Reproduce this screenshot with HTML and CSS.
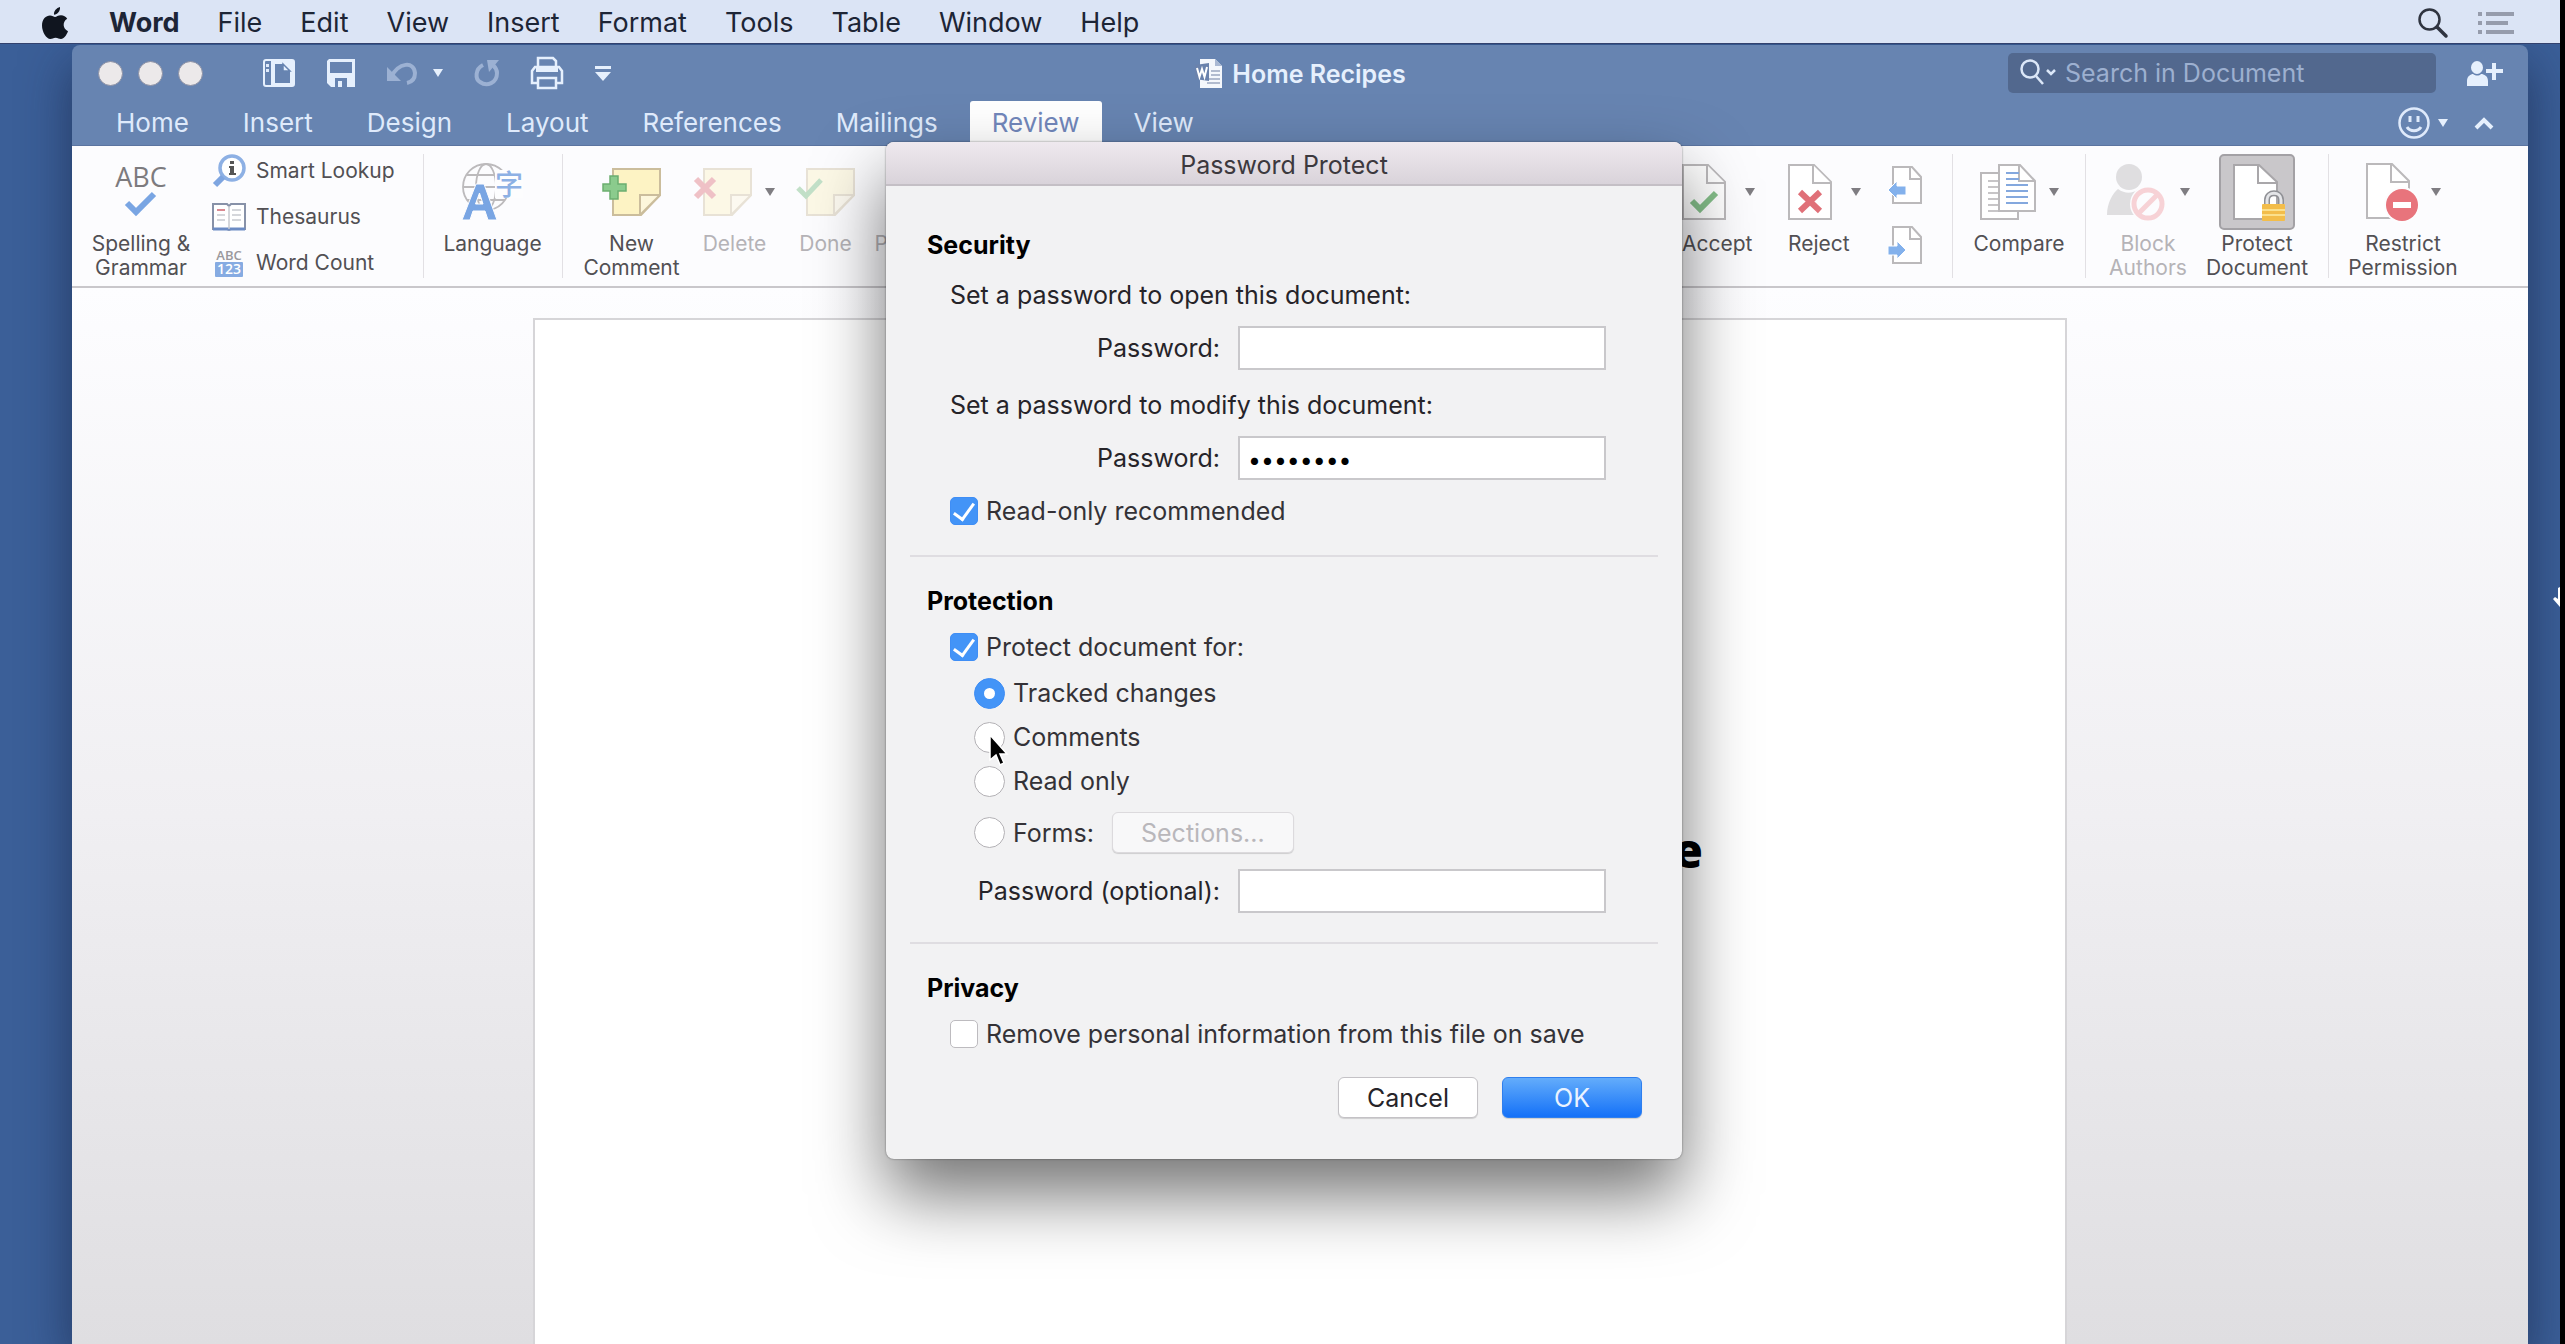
FILE: index.html
```html
<!DOCTYPE html>
<html lang="en">
<head>
<meta charset="utf-8">
<title>Home Recipes</title>
<link rel="stylesheet" href="styles.css">
</head>
<body>
<svg class="defs" width="0" height="0" aria-hidden="true">
  <symbol id="caret" viewBox="0 0 10 8"><path d="M0 0H10L5 8Z" fill="currentColor"/></symbol>
  <symbol id="note" viewBox="0 0 58 48">
    <path d="M10 1H57V27L38 47H10Z" fill="#fdf3c4" stroke="#cbbd9c" stroke-width="2"/>
    <path d="M57 27H37V47Z" fill="#fdf7dc" stroke="#cbbd9c" stroke-width="2"/>
  </symbol>
  <symbol id="sheet" viewBox="0 0 44 56">
    <path d="M1 1H26L43 18V55H1Z" fill="#fff" stroke="#bbb9bb" stroke-width="2"/>
    <path d="M25 1V19H43" fill="#fff" stroke="#bbb9bb" stroke-width="2"/>
  </symbol>
</svg>

<header class="menubar">
  <svg class="apple" width="26" height="32" viewBox="0 0 26 32"><path d="M18 0C18.400 4 15.500 7.500 12 7.800 11.600 4 14.500 1 18 0ZM13 10C14.500 10 16 8.300 19 8.300 21.500 8.300 24 9.500 25.200 11.800 20 15 20.800 22 26 24.200 24.500 28 22 32 19 32 16.800 32 16 30.700 13.600 30.700 11.200 30.700 10.300 32 8.300 32 4.500 32 0 25 0 18.500 0 12 4 8.500 8 8.500 10.300 8.500 12 10 13 10Z" fill="#10151f"/></svg>
  <nav class="menus">
    <a href="#" class="app">Word</a><a href="#">File</a><a href="#">Edit</a><a href="#">View</a><a href="#">Insert</a><a href="#">Format</a><a href="#">Tools</a><a href="#">Table</a><a href="#">Window</a><a href="#">Help</a>
  </nav>
  <div class="status">
    <button type="button" aria-label="Spotlight"><svg width="30" height="30" viewBox="0 0 30 30" fill="none" stroke="#2f3440"><circle cx="11.500" cy="11.500" r="10" stroke-width="2.500"/><path d="M19 19L28 28" stroke-width="3.500" stroke-linecap="round"/></svg></button>
    <button type="button" aria-label="Notifications"><svg width="36" height="24" viewBox="0 0 36 24" fill="#969cac"><path d="M0 1H4V5H0ZM8 1H36V5H8ZM0 10H4V14H0ZM8 10H30V14H8ZM0 19H4V23H0ZM8 19H36V23H8Z"/></svg></button>
  </div>
</header>

<main class="desktop">
  <section class="window">
    <div class="titlebar">
      <div class="left-tools">
        <div class="lights"><button type="button" aria-label="Close"></button><button type="button" aria-label="Minimize"></button><button type="button" aria-label="Zoom"></button></div>
        <div class="quick">
          <button type="button" aria-label="Sidebar"><svg width="32" height="28" viewBox="0 0 32 28"><rect x="1" y="1" width="30" height="26" rx="2" fill="none" stroke="#e6f0fd" stroke-width="2"/><path d="M8 1H31V27H8Z" fill="#e6f0fd"/><path d="M3 5H6V8H3ZM3 10H6V13H3Z" fill="#dfeafb"/><path d="M12 5H20L27 12V24H12Z" fill="#6784b1"/><path d="M20 5V12H27Z" fill="#e6f0fd" stroke="#6784b1" stroke-width="1.500"/></svg></button>
          <button type="button" aria-label="Save"><svg width="28" height="28" viewBox="0 0 28 28"><path d="M2 0H28V28H4L0 24V2Z" fill="#e6f0fd"/><path d="M3 3H25V14H3Z" fill="#6784b1"/><path d="M8 19H20V28H8Z" fill="#6784b1"/><path d="M11 22H15V28H11Z" fill="#e6f0fd"/></svg></button>
          <button type="button" aria-label="Undo" class="with-caret"><svg width="30" height="24" viewBox="0 0 30 24"><path d="M4 16C12 1 27 0 28 12 28 18 25 21 20 22" fill="none" stroke="#9cb1d3" stroke-width="4"/><path d="M0 6V20H14Z" fill="#9cb1d3"/></svg><svg class="caret" width="10" height="8"><use href="#caret"/></svg></button>
          <button type="button" aria-label="Redo"><svg width="24" height="26" viewBox="0 0 24 26"><path d="M8 5C0 9 0 19 5 22 12 27 22 23 22 13 22 9 20 7 18 5" fill="none" stroke="#9cb1d3" stroke-width="4"/><path d="M12 0H24L14 12Z" fill="#9cb1d3"/></svg></button>
          <button type="button" aria-label="Print"><svg width="32" height="32" viewBox="0 0 32 32" fill="none" stroke="#e6f0fd" stroke-width="2.500"><path d="M7 12V1H22L25 4V12"/><path d="M4 10H28L31 14V26H1V14Z"/><path d="M5 9H27V15H5Z" fill="#e6f0fd" stroke="none"/><path d="M7 21H25V31H7Z" fill="#6784b1"/></svg></button>
          <button type="button" aria-label="Customize toolbar"><svg width="16" height="15" viewBox="0 0 16 15" fill="#e6f0fd"><path d="M0 0H16V3H0ZM0 6H16L8 15Z"/></svg></button>
        </div>
      </div>
      <h1 class="doc-title"><svg width="28" height="30" viewBox="0 0 28 30"><path d="M5 0H20L27 7V29H5Z" fill="#f4f7fc"/><path d="M20 0V7H27Z" fill="#aab9d4"/><path d="M16 12H25M16 16H25M12 20H25M12 24H25" stroke="#9aa8c0" stroke-width="1.500"/><path d="M0 6L14 4V22L0 20Z" fill="#6a82ac"/><path d="M2 9L4.500 18 7 10 9.500 18 12 8" fill="none" stroke="#fff" stroke-width="2"/></svg>Home Recipes</h1>
      <div class="right-tools">
        <label class="search">
          <svg width="36" height="28" viewBox="0 0 36 28" fill="none" stroke="#dbe7f8" stroke-width="2.500"><circle cx="10" cy="10" r="8.500"/><path d="M16 17L23 25"/><path d="M27 11L31 15 35 11"/></svg>
          <input type="search" placeholder="Search in Document" aria-label="Search in Document">
        </label>
        <button type="button" aria-label="Share"><svg width="36" height="25" viewBox="0 0 36 25" fill="#e6f0fd"><ellipse cx="10" cy="6.500" rx="6" ry="6.500"/><path d="M0 25V20C0 15 4 13 6 13 9 15 12 15 14 13 17 13 21 15 21 20V25ZM25 2H29V8H36V12H29V19H25V12H19V8H25Z"/></svg></button>
      </div>
    </div>
    <div class="tabbar">
      <nav class="tabs"><a href="#">Home</a><a href="#">Insert</a><a href="#">Design</a><a href="#">Layout</a><a href="#">References</a><a href="#">Mailings</a><a href="#" class="active">Review</a><a href="#">View</a></nav>
      <div class="tab-tools">
        <button type="button" aria-label="Feedback" class="with-caret near"><svg width="32" height="32" viewBox="0 0 32 32" fill="none" stroke="#dfeafb" stroke-width="2.500"><circle cx="16" cy="16" r="14.500"/><path d="M9 20C12 25 20 25 23 20M12 9V15M20 9V15" stroke-width="3"/></svg><svg class="caret" width="10" height="8"><use href="#caret"/></svg></button>
        <button type="button" aria-label="Collapse ribbon"><svg width="20" height="13" viewBox="0 0 20 13" fill="none" stroke="#e6f0fd" stroke-width="4"><path d="M2 11L10 3 18 11"/></svg></button>
      </div>
    </div>

    <div class="ribbon">
      <div class="group proofing">
        <button type="button" class="tool w98">
          <span class="icon"><svg width="56" height="52" viewBox="0 0 56 52"><text x="28" y="21" text-anchor="middle" class="abc">ABC</text><path d="M14 37L23 46 41 28" fill="none" stroke="#79a5e3" stroke-width="6"/></svg></span>
          <span>Spelling &amp;<br>Grammar</span>
        </button>
        <div class="stack">
          <button type="button"><svg width="34" height="34" viewBox="0 0 34 34"><circle cx="20" cy="14" r="12" fill="#fff" stroke="#8db0e4" stroke-width="3.500"/><path d="M11 23L3 31" stroke="#7ea5e0" stroke-width="6"/><path d="M18 7H22V10H18ZM17 12H22V19H24V21H17V19H18V14H17Z" fill="#555"/></svg>Smart Lookup</button>
          <button type="button"><svg width="34" height="28" viewBox="0 0 34 28"><path d="M1 1H15L17 3 19 1H33V26H19L17 27 15 26H1Z" fill="#fff" stroke="#8791a8" stroke-width="2"/><path d="M1 26H33" stroke="#6d8cc4" stroke-width="3"/><path d="M17 3V26M20 7H29M20 12H29M20 17H29M5 12H13M5 17H13" stroke="#c8cad0" stroke-width="1.500"/><path d="M5 7H13" stroke="#d98a92" stroke-width="2"/></svg>Thesaurus</button>
          <button type="button"><svg width="34" height="28" viewBox="0 0 34 28"><text x="17" y="11" text-anchor="middle" class="abc-mini">ABC</text><rect x="3" y="13" width="28" height="15" rx="1" fill="#86abe2"/><text x="17" y="25" text-anchor="middle" class="num-mini">123</text></svg>Word Count</button>
        </div>
      </div>
      <div class="group">
        <button type="button" class="tool w98">
          <span class="icon"><svg width="62" height="58" viewBox="0 0 62 58"><g fill="none" stroke="#bcbabc" stroke-width="1.800"><circle cx="24" cy="24" r="23"/><ellipse cx="24" cy="24" rx="10" ry="23"/><path d="M1 24H47M5 12H43M5 37H43"/></g><path d="M0 57L14 21H22L35 57H26L23 48H11L8 57ZM13.500 41H21L17.500 30Z" fill="#79a5e3" stroke="#fdfdfe" stroke-width="1"/><path d="M33 7H61V35H33Z" fill="#fdfdfe"/><text x="47" y="32" text-anchor="middle" class="hanzi">字</text></svg></span>
          <span>Language</span>
        </button>
      </div>
      <div class="group comments">
        <button type="button" class="tool w98">
          <span class="icon"><svg width="58" height="48" viewBox="0 0 58 48"><use href="#note"/><path d="M7 8H15V16H23V23H15V31H7V23H0V16H7Z" fill="#8bcb8d" stroke="#6cae70" stroke-width="1.500"/></svg></span>
          <span>New<br>Comment</span>
        </button>
        <button type="button" class="tool w84 off" disabled>
          <span class="icon"><svg width="58" height="48" viewBox="0 0 58 48"><use href="#note"/><path d="M2 11L20 29M20 11L2 29" stroke="#de6a74" stroke-width="6"/></svg><svg class="caret" width="10" height="8"><use href="#caret"/></svg></span>
          <span>Delete</span>
        </button>
        <button type="button" class="tool w74 off" disabled>
          <span class="icon"><svg width="58" height="48" viewBox="0 0 58 48"><use href="#note"/><path d="M1 20L9 28 24 12" fill="none" stroke="#6cb878" stroke-width="5"/></svg></span>
          <span>Done</span>
        </button>
        <button type="button" class="tool start off" disabled>
          <span class="icon"></span>
          <span>Prev</span>
        </button>
      </div>

      <div class="group push">
        <button type="button" class="tool w80 start">
          <span class="icon"><svg width="44" height="56" viewBox="0 0 44 56"><use href="#sheet"/><path d="M10 37L18 45 34 29" fill="none" stroke="#85bf8a" stroke-width="6"/></svg><svg class="caret far" width="10" height="8"><use href="#caret"/></svg></span>
          <span>Accept</span>
        </button>
        <button type="button" class="tool w74 start">
          <span class="icon"><svg width="44" height="56" viewBox="0 0 44 56"><use href="#sheet"/><path d="M12 28L32 47M32 28L12 47" stroke="#e07078" stroke-width="6"/></svg><svg class="caret far" width="10" height="8"><use href="#caret"/></svg></span>
          <span>Reject</span>
        </button>
        <div class="steps">
          <button type="button" aria-label="Previous change"><svg width="34" height="38" viewBox="0 0 34 38"><path d="M5 1H24L33 11V37H5Z" fill="#fff" stroke="#bbb9bb" stroke-width="2"/><path d="M22 1V13H33" fill="none" stroke="#bbb9bb" stroke-width="2"/><path d="M0 24L9 15V20H18V29H9V33Z" fill="#83b1ec" stroke="#fff"/></svg></button>
          <button type="button" aria-label="Next change"><svg width="34" height="38" viewBox="0 0 34 38"><path d="M5 1H24L33 11V37H5Z" fill="#fff" stroke="#bbb9bb" stroke-width="2"/><path d="M22 1V13H33" fill="none" stroke="#bbb9bb" stroke-width="2"/><path d="M18 24L9 15V20H0V29H9V33Z" fill="#83b1ec" stroke="#fff"/></svg></button>
        </div>
      </div>
      <div class="group">
        <button type="button" class="tool w92">
          <span class="icon"><svg width="56" height="56" viewBox="0 0 56 56"><path d="M1 9H38V55H1Z" fill="#fff" stroke="#bbb9bb" stroke-width="2"/><path d="M8 17H20M8 23H20M8 29H20M8 35H20M8 41H20M8 47H32" stroke="#b5b3b5" stroke-width="1.500"/><path d="M19 1H40L55 17V47H19Z" fill="#fff" stroke="#bbb9bb" stroke-width="2"/><path d="M39 1V17H55" fill="none" stroke="#bbb9bb" stroke-width="2"/><path d="M26 9H39M26 15H39M26 21H48M26 27H48M26 33H48M26 39H48" stroke="#84a8de" stroke-width="2"/></svg><svg class="caret" width="10" height="8"><use href="#caret"/></svg></span>
          <span>Compare</span>
        </button>
      </div>
      <div class="group">
        <button type="button" class="tool w84 off" disabled>
          <span class="icon"><svg width="60" height="58" viewBox="0 0 60 58"><circle cx="22" cy="14" r="13" fill="#b4b2b5"/><path d="M0 52C0 40 6 30 11 26 18 31 25 31 32 26 38 32 40 42 40 52Z" fill="#b4b2b5"/><circle cx="41" cy="41" r="18" fill="#fdfdfe"/><circle cx="41" cy="41" r="14" fill="none" stroke="#f0969c" stroke-width="5"/><path d="M31 51L51 31" stroke="#f0969c" stroke-width="5"/></svg><svg class="caret" width="10" height="8"><use href="#caret"/></svg></span>
          <span>Block<br>Authors</span>
        </button>
        <button type="button" class="tool w102 pressed">
          <span class="icon"><svg width="56" height="60" viewBox="0 0 56 60"><path d="M5 3H30L48 20V57H5Z" fill="#fff" stroke="#a9a7aa" stroke-width="2"/><path d="M29 3V21H47" fill="none" stroke="#a9a7aa" stroke-width="2"/><path d="M38 44V38C38 29 52 29 52 38V44" fill="none" stroke="#8f9095" stroke-width="6"/><path d="M38 44V38C38 29 52 29 52 38V44" fill="none" stroke="#e4e5e8" stroke-width="3"/><rect x="33" y="42" width="23" height="17" rx="1" fill="#f3bd4a"/><path d="M33 48H56M33 53H56" stroke="#fbe08c" stroke-width="2"/></svg></span>
          <span>Protect<br>Document</span>
        </button>
      </div>
      <div class="group">
        <button type="button" class="tool w108">
          <span class="icon"><svg width="52" height="58" viewBox="0 0 52 58"><path d="M1 1H26L43 18V55H1Z" fill="#fff" stroke="#bbb9bb" stroke-width="2"/><path d="M25 1V19H43" fill="none" stroke="#bbb9bb" stroke-width="2"/><circle cx="36" cy="42" r="18" fill="#fdfdfe"/><circle cx="36" cy="42" r="16" fill="#e8747c"/><path d="M27 39H45V45H27Z" fill="#fff"/></svg><svg class="caret" width="10" height="8"><use href="#caret"/></svg></span>
          <span>Restrict<br>Permission</span>
        </button>
      </div>
    </div>

    <div class="workspace">
      <article class="page"><p>e</p></article>
    </div>

    <form class="dialog" role="dialog" aria-labelledby="dlg-title">
      <h2 id="dlg-title" class="dlg-title">Password Protect</h2>
      <div class="dlg-body">
        <section class="part">
          <h3>Security</h3>
          <p>Set a password to open this document:</p>
          <div class="field"><label for="open-pw">Password:</label><input id="open-pw" type="password"></div>
          <p>Set a password to modify this document:</p>
          <div class="field"><label for="mod-pw">Password:</label><input id="mod-pw" type="password" value="homemade"></div>
          <label class="option"><input type="checkbox" checked>Read-only recommended</label>
        </section>
        <section class="part">
          <h3>Protection</h3>
          <label class="option"><input type="checkbox" checked>Protect document for:</label>
          <div class="choices">
            <label class="option"><input type="radio" name="protect" checked>Tracked changes</label>
            <label class="option"><input type="radio" name="protect">Comments</label>
            <label class="option"><input type="radio" name="protect">Read only</label>
          </div>
          <div class="forms">
            <label class="option"><input type="radio" name="protect">Forms:</label>
            <button type="button" class="btn sections" disabled>Sections...</button>
          </div>
          <div class="field"><label for="opt-pw">Password (optional):</label><input id="opt-pw" type="password"></div>
        </section>
        <section class="part">
          <h3>Privacy</h3>
          <label class="option"><input type="checkbox">Remove personal information from this file on save</label>
          <div class="actions">
            <button type="button" class="btn">Cancel</button>
            <button type="submit" class="btn primary">OK</button>
          </div>
        </section>
      </div>
      <svg class="pointer" width="20" height="32" viewBox="0 0 20 32"><path d="M1 1V26L7 21 11 31 15 29 11 20H18Z" fill="#000" stroke="#fff" stroke-width="1.500"/></svg>
    </form>
  </section>
  <svg class="edge-pointer" width="7" height="20" viewBox="0 0 7 20"><path d="M7 0V20L0 12 2 10 5 12V1Z" fill="#fff"/></svg>
</main>
</body>
</html>
```
FILE: styles.css
```css
* { box-sizing: border-box; }

body {
  margin: 0;
  min-height: 100vh;
  display: flex;
  flex-direction: column;
  border-right: 5px solid #000;
  background: #3b5f98;
  font-family: Inter, "Liberation Sans", sans-serif;
  font-size: 25px;
  line-height: 30px;
  color: #262429;
}

h1, h2, h3, p { margin: 0; font-size: inherit; }
a { color: inherit; text-decoration: none; }
button { font: inherit; color: inherit; border: 0; padding: 0; background: none; }
svg { display: block; flex: none; overflow: visible; }
.defs { position: absolute; }

/* system menu bar */
.menubar {
  display: flex;
  align-items: center;
  height: 44px;
  padding: 2px 46px 0 42px;
  background: #dbe4f5;
  border-bottom: 1px solid #33426e;
  font-size: 27px;
  color: #1d2536;
}
.menus { display: flex; gap: 38px; margin-left: 41px; }
.menus .app { font-weight: 700; }
.status { display: flex; align-items: center; gap: 30px; margin-left: auto; }

.desktop {
  position: relative;
  flex: 1;
  display: flex;
  padding: 1px 32px 0 72px;
  overflow: hidden;
  background: #3b5f98;
}
.window {
  position: relative;
  flex: 1;
  display: flex;
  flex-direction: column;
  border-radius: 8px 8px 0 0;
  box-shadow: 0 20px 50px rgba(20, 30, 60, .6);
  background: #6784b1;
}

/* title bar */
.titlebar {
  display: grid;
  grid-template-columns: 1fr auto 1fr;
  align-items: center;
  height: 56px;
  padding: 0 25px 0 26px;
  color: #e6f0fd;
}
.left-tools, .lights, .quick, .right-tools, .with-caret { display: flex; align-items: center; }
.left-tools { gap: 60px; }
.lights { gap: 15px; }
.lights button { width: 25px; height: 25px; border-radius: 50%; background: #ece9ea; border: 1px solid #8a8fa3; }
.quick { gap: 32px; }
.with-caret { gap: 16px; }
.with-caret.near { gap: 8px; }
.doc-title { display: flex; align-items: center; gap: 9px; padding-top: 2px; font-weight: 600; }
.right-tools { justify-content: flex-end; gap: 31px; }
.search {
  display: flex;
  align-items: center;
  gap: 9px;
  width: 428px;
  height: 40px;
  padding: 0 12px;
  border-radius: 5px;
  background: #52688e;
}
.search input { flex: 1; min-width: 0; border: 0; padding: 0; background: none; font: inherit; color: #e6f0fd; }
.search input::placeholder { color: #9db0d0; opacity: 1; }

/* ribbon tabs */
.tabbar { display: flex; justify-content: space-between; align-items: stretch; padding: 0 34px 0 22px; color: #dfeafb; }
.tabs { display: flex; gap: 10px; font-size: 26px; }
.tabs a { padding: 7px 22px; }
.tabs .active { background: #fff; color: #7287bb; border-radius: 3px 3px 0 0; }
.tab-tools { display: flex; align-items: center; gap: 26px; }

/* ribbon */
.ribbon {
  display: flex;
  height: 143px;
  padding: 8px 51px 8px 0;
  border-top: 1px solid #5b74a0;
  border-bottom: 2px solid #c9c7cb;
  background: #fcfcfe;
  font-size: 21px;
  line-height: 24px;
  color: #525054;
}
.group { display: flex; align-items: flex-start; gap: 16px; padding: 0 20px; border-left: 1px solid #e2e0e4; }
.group.proofing { gap: 22px; padding-right: 28px; }
.group.comments { gap: 12px; }
.group.proofing, .group.push { border-left: 0; }
.group.push { margin-left: auto; gap: 26px; padding-right: 30px; }
.tool { display: flex; flex-direction: column; align-items: center; gap: 2px; text-align: center; white-space: nowrap; }
.tool.start { align-items: flex-start; }
.w74 { width: 74px; }
.w80 { width: 80px; }
.w84 { width: 84px; }
.w92 { width: 92px; }
.w98 { width: 98px; }
.w102 { width: 102px; }
.w108 { width: 108px; }
.icon { display: flex; align-items: center; justify-content: center; gap: 13px; height: 76px; }
.caret { color: #7f7d82; }
.caret.far { margin-left: 6px; }
.titlebar .caret, .tabbar .caret { color: #e6f0fd; }
.off { color: #b5b3b7; }
.off .icon > svg:not(.caret) { opacity: .4; }
.pressed .icon { width: 76px; border: 2px solid #a3a1a5; border-radius: 5px; background: #c9c7ca; }
.stack { display: flex; flex-direction: column; gap: 12px; }
.stack button { display: flex; align-items: center; gap: 10px; height: 34px; white-space: nowrap; }
.steps { display: flex; flex-direction: column; gap: 22px; padding-top: 12px; }
.abc { font: 500 27px "Open Sans", sans-serif; fill: #7d7b7e; }
.abc-mini { font: 600 13px "Open Sans", sans-serif; fill: #9a989c; }
.num-mini { font: 600 14px "Open Sans", sans-serif; fill: #fff; }
.hanzi { font: 500 28px "Noto Sans CJK SC", sans-serif; fill: #8db0e4; }

/* document area */
.workspace { flex: 1; display: flex; justify-content: center; padding-top: 30px; background: linear-gradient(#fdfdff, #f0eff2 50%, #dfdee1); }
.page { width: 1534px; border: 2px solid #d6d5d8; border-bottom: 0; background: #fff; }
.page p { padding: 502px 362px 0 0; text-align: right; font: 800 48px/56px "Open Sans", sans-serif; color: #000; }

/* password dialog */
.dialog {
  position: absolute;
  top: 97px;
  left: calc(50% - 414px);
  width: 796px;
  border-radius: 8px;
  background: #f2f2f3;
  box-shadow: 0 0 2px rgba(0, 0, 0, .5), 0 36px 70px rgba(0, 0, 0, .55);
}
.dlg-title {
  height: 44px;
  padding: 8px 0 4px;
  border-bottom: 2px solid #c4bfc5;
  border-radius: 8px 8px 0 0;
  background: linear-gradient(#efe9ef, #d9d3da);
  text-align: center;
  font-weight: 400;
  color: #3c393e;
}
.dlg-body { padding: 15px 24px 41px; }
.part { padding: 29px 16px 29px 17px; }
.part + .part { border-top: 2px solid #dfdde1; }
.part:last-child { padding-bottom: 0; }
.part h3 { font-weight: 700; color: #000; }
.part p { padding: 20px 0 0 23px; }
.field { display: grid; grid-template-columns: 293px 368px; gap: 18px; align-items: center; margin-top: 16px; }
.field label { text-align: right; }
.field input { height: 44px; padding: 4px 8px 0; border: 2px solid #c9c8cb; background: #fff; font: inherit; font-size: 23px; color: #000; outline: 0; }
.option { display: flex; align-items: center; gap: 8px; width: max-content; margin: 16px 0 0 23px; color: #343237; }
.option input { appearance: none; display: grid; place-items: center; flex: none; margin: 0; width: 28px; height: 28px; border: 1px solid #bdbbbf; border-radius: 5px; background: #fff; }
.option input:checked { border-color: #3f8ef5; background: #4394f7; }
.option input[type="checkbox"]:checked { padding-bottom: 4px; }
.option input[type="checkbox"]:checked::after {
  content: "";
  width: 9px;
  height: 18px;
  border: solid #fff;
  border-width: 0 3px 3px 0;
  transform: rotate(36deg);
}
.option input[type="radio"] { width: 31px; height: 31px; margin: -1px 0; border-color: #b3b1b5; border-radius: 50%; }
.option input[type="radio"]:checked { border-color: #3f8ef5; }
.option input[type="radio"]:checked::after { content: ""; width: 11px; height: 11px; border-radius: 50%; background: #fff; }
.choices { display: grid; gap: 14px; padding: 16px 0 0 47px; }
.choices .option { margin: 0; }
.forms { display: flex; align-items: center; gap: 18px; padding: 16px 0 0 47px; }
.forms .option { margin: 0; }
.btn {
  width: 140px;
  height: 41px;
  border: 1px solid #c4c2c6;
  border-radius: 6px;
  background: #fff;
  box-shadow: 0 1px 1px rgba(0, 0, 0, .15);
}
.sections { width: 182px; border-color: #dcdadd; background: #f8f8f9; color: #b9b7bb; }
.primary { border-color: #2f7fee; background: linear-gradient(#63acfb, #1471f8); color: #eaf3ff; }
.actions { display: flex; justify-content: flex-end; gap: 24px; margin-top: 28px; }

.pointer { position: absolute; left: 103px; top: 592px; }
.edge-pointer { position: absolute; right: 0; top: 543px; }
```
